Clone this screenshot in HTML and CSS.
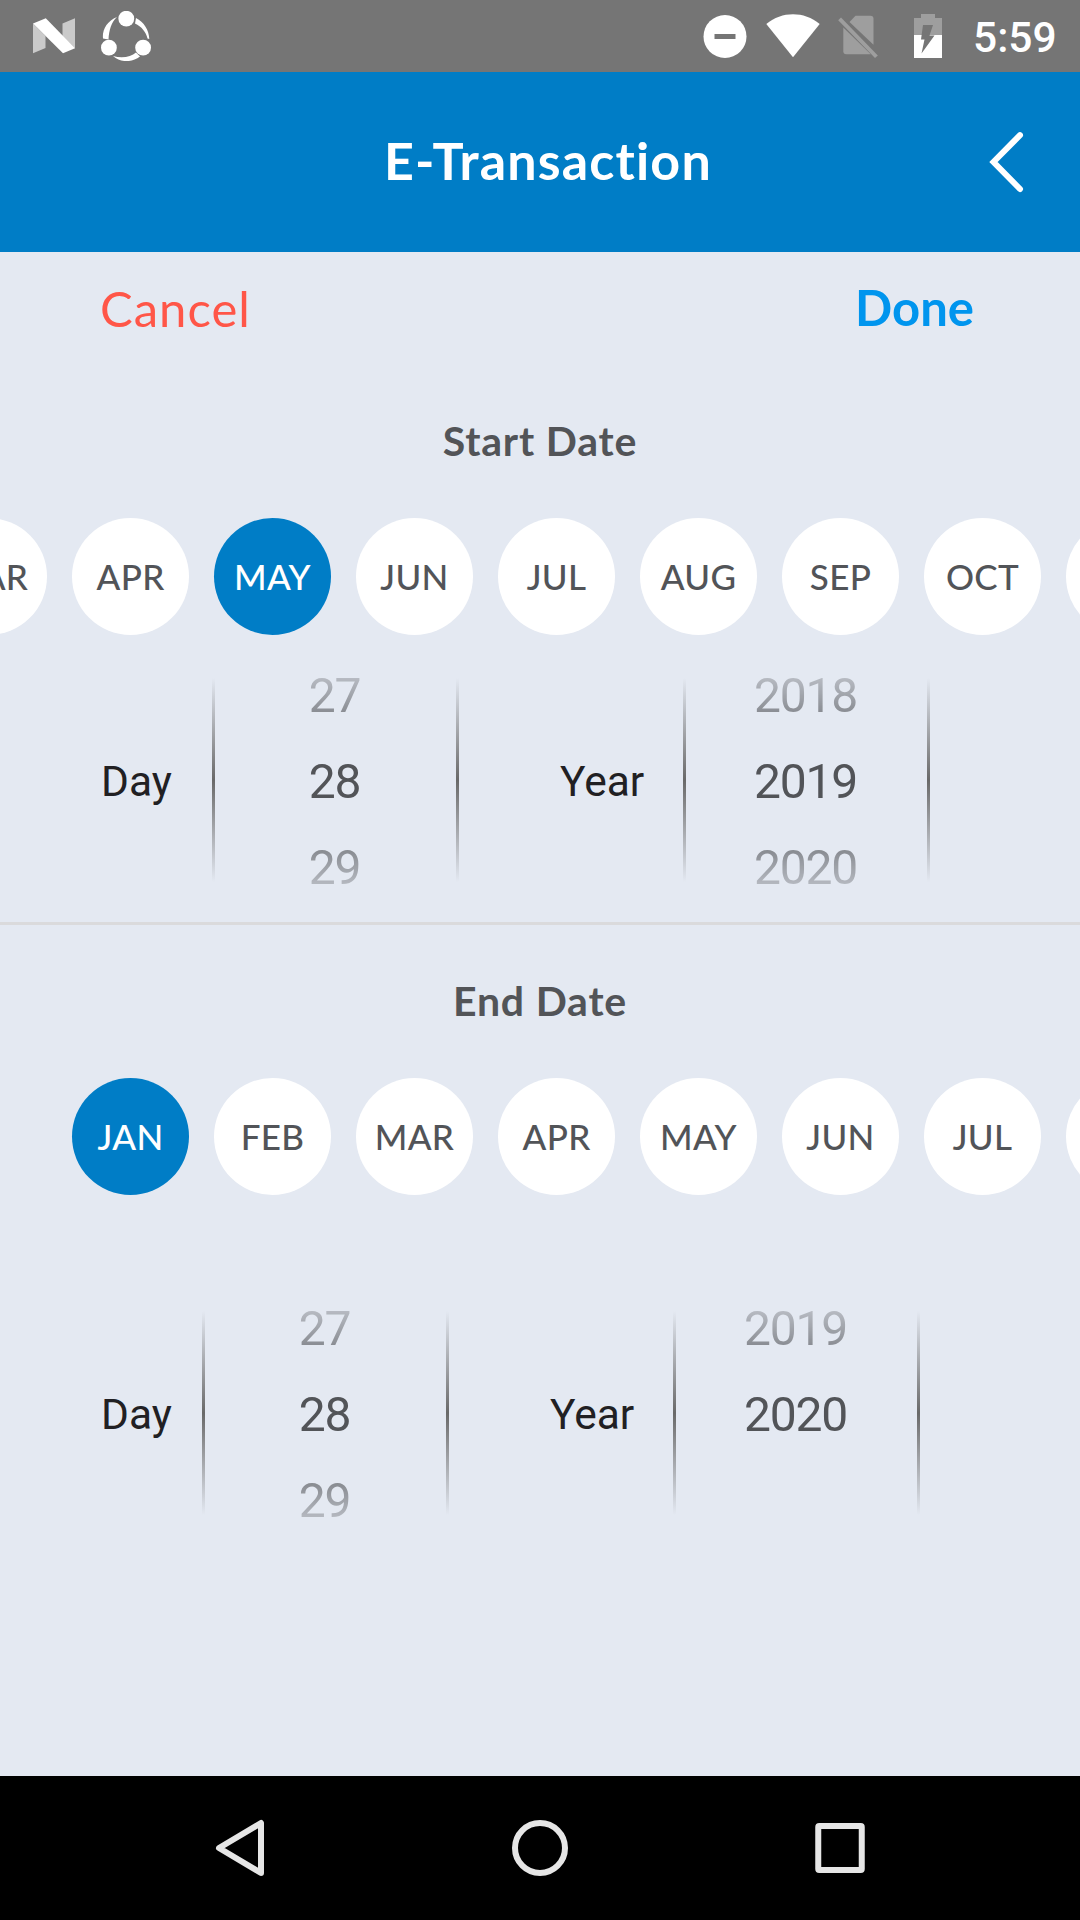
FILE: index.html
```html
<!DOCTYPE html>
<html lang="en">
<head>
<meta charset="utf-8">
<title>E-Transaction</title>
<link rel="stylesheet" href="styles.css">
</head>
<body>
<div class="screen">
  <div class="status">
    <svg class="icon-n" width="42" height="36" viewBox="0 0 42 36"><path fill="#cacaca" d="M0 5.500L12.500 18V30L0 35.300zM29.500 5.500L42 .3V30.500L29.500 18z"/><path fill="#fff" d="M0 5.500L12.800 .2L42 30.300L30 35.300z"/></svg>
    <svg class="icon-share" width="50" height="50" viewBox="0 0 50 50"><g fill="#fff"><circle cx="25.300" cy="7.700" r="7.900"/><circle cx="7.900" cy="36.700" r="7.900"/><circle cx="42.100" cy="36.700" r="7.900"/><path d="M16 6C6 10 1 19 2 27.500L7.500 28.500C8 19 10.500 11 16 6zM35 7C43 11 48 19 48.300 28L46.500 27.500C45 21 40.500 15.500 34 12.500zM12 45C20 52 31 51.500 39 45.500L35 41.500C30 46 21 47.500 12 45z"/></g></svg>
    <span class="spacer"></span>
    <svg class="icon-dnd" width="44" height="44" viewBox="0 0 44 44"><circle cx="22" cy="22.500" r="21.500" fill="#fff"/><path fill="#757575" d="M11.500 20h21v5h-21z"/></svg>
    <svg class="icon-wifi" width="54" height="44" viewBox="0 0 54 44"><path fill="#fff" d="M.3 10C16-3 38-3 53.700 10L27 43.200z"/></svg>
    <svg class="icon-sim" width="42" height="44" viewBox="0 0 42 44"><g fill="#9e9e9e"><path d="M12.500 8L18.500 1.800H33.500Q36.500 1.800 36.500 4.800V30.800z"/><path d="M6.300 13.500L33.800 40.300H9.300Q6.300 40.300 6.300 37.300z"/><path d="M1.200 6.300L4 3.600L40.800 41.500L38 44z"/></g></svg>
    <svg class="icon-battery" width="28" height="44" viewBox="0 0 28 44"><path fill="#9e9e9e" d="M7 0H21V4H28V21H0V4H7z"/><path fill="#fff" d="M0 21H28V44H0z"/><path fill="#757575" d="M9 11H19L15.500 21.500H20.500L7.500 39.500L10.500 25.500H7z"/></svg>
    <span class="clock">5:59</span>
  </div>
  <header class="header">
    <h1 class="title">E-Transaction</h1>
    <svg class="back" width="40" height="64" viewBox="0 0 40 64"><path fill="none" stroke="#fff" stroke-width="6" stroke-linecap="round" d="M33 5.200L6.500 32L33 59"/></svg>
  </header>
  <main class="content">
    <div class="actions"><span class="cancel">Cancel</span><span class="done">Done</span></div>
    <section class="range range-start">
      <h2 class="heading">Start Date</h2>
      <div class="months scrolled">
        <span class="month">MAR</span><span class="month">APR</span><span class="month selected">MAY</span><span class="month">JUN</span><span class="month">JUL</span><span class="month">AUG</span><span class="month">SEP</span><span class="month">OCT</span><span class="month">NOV</span>
      </div>
      <div class="pickers">
        <span class="label">Day</span>
        <div class="wheel"><div class="values"><span>27</span><span>28</span><span>29</span></div></div>
        <span class="label year">Year</span>
        <div class="wheel"><div class="values"><span>2018</span><span>2019</span><span>2020</span></div></div>
      </div>
    </section>
    <section class="range range-end">
      <h2 class="heading">End Date</h2>
      <div class="months">
        <span class="month selected">JAN</span><span class="month">FEB</span><span class="month">MAR</span><span class="month">APR</span><span class="month">MAY</span><span class="month">JUN</span><span class="month">JUL</span><span class="month">AUG</span>
      </div>
      <div class="pickers">
        <span class="label">Day</span>
        <div class="wheel"><div class="values"><span>27</span><span>28</span><span>29</span></div></div>
        <span class="label year">Year</span>
        <div class="wheel"><div class="values"><span>2019</span><span>2020</span><span></span></div></div>
      </div>
    </section>
  </main>
  <nav class="navbar">
    <svg width="60" height="60" viewBox="0 0 60 60"><path fill="none" stroke="#e6e6e6" stroke-width="6" stroke-linejoin="round" d="M51 5V55L9 30z"/></svg>
    <svg width="60" height="60" viewBox="0 0 60 60"><circle cx="30" cy="30" r="25" fill="none" stroke="#e6e6e6" stroke-width="6"/></svg>
    <svg width="60" height="60" viewBox="0 0 60 60"><rect x="8.250" y="8" width="43.500" height="44" rx="1" fill="none" stroke="#e6e6e6" stroke-width="6"/></svg>
  </nav>
</div>
</body>
</html>
```
FILE: styles.css
```css
* { box-sizing: border-box; }
body { margin: 0; font-family: Lato, sans-serif; }
svg { display: block; flex: none; }
.screen { width: 1080px; height: 1920px; display: flex; flex-direction: column; overflow: hidden; background: #e4e9f2; }

.status { height: 72px; flex: none; display: flex; align-items: flex-start; padding: 0 25px 0 33px; background: #757575; }
.icon-n { margin-top: 18px; }
.icon-share { margin: 11px 0 0 26px; }
.spacer { flex: 1; }
.icon-dnd { margin-top: 14px; }
.icon-wifi { margin: 14px 0 0 19px; }
.icon-sim { margin: 14px 0 0 17px; }
.icon-battery { margin: 14px 0 0 35px; }
.clock { width: 82px; margin-left: 31px; color: #fff; font: 500 42.500px/76px Roboto, sans-serif; white-space: nowrap; }

.header { height: 180px; flex: none; display: flex; align-items: center; justify-content: space-between; padding: 0 53px 0 384px; background: #007dc6; }
.title { margin: 0; color: #fff; font-size: 52px; font-weight: 700; letter-spacing: 1.15px; line-height: 64px; padding-bottom: 4px; white-space: nowrap; }

.content { flex: 1; display: flex; flex-direction: column; }
.actions { height: 111px; display: flex; justify-content: space-between; align-items: center; padding: 0 106px 0 100px; font-size: 49px; line-height: 60px; }
.cancel { color: #ff5648; letter-spacing: 1px; }
.done { color: #0095ee; font-weight: 700; padding-bottom: 2px; }

.range { display: flex; flex-direction: column; }
.heading { margin: 0; color: #525458; font-size: 41px; font-weight: 700; letter-spacing: .8px; text-align: center; line-height: 50px; }
.range-start { height: 562px; padding-top: 53px; border-bottom: 3px solid #dadadc; }
.range-end { padding-top: 51px; }
.months { display: flex; gap: 25px; margin-top: 52px; padding-left: 72px; overflow: hidden; }
.months.scrolled { padding-left: 0; margin-left: -70px; }
.month { width: 117px; height: 117px; flex: none; border-radius: 50%; background: #fff; color: #525458; font-size: 35px; font-weight: 500; letter-spacing: .3px; line-height: 116px; text-align: center; }
.month.selected { background: #007dc6; color: #fff; }

.pickers { height: 258px; display: flex; align-items: center; padding-left: 101px; margin-top: 18px; font-family: Roboto, sans-serif; }
.range-end .pickers { margin-top: 91px; }
.label { width: 111px; color: #212023; font-size: 42.500px; line-height: 50px; }
.label.year { width: 123px; margin-left: 101px; }
.range-end .label { width: 101px; }
.range-end .label.year { width: 123px; }
.wheel { width: 247px; height: 258px; display: flex; align-items: center; }
.wheel::before, .wheel::after { content: ""; width: 3px; height: 204px; margin-bottom: 4px; background: linear-gradient(rgba(105,105,105,0), #696969 50%, rgba(105,105,105,0)); }
.values { flex: 1; display: grid; grid-template-rows: repeat(3, 86px); padding-right: 2px; color: #525458; font-size: 48px; letter-spacing: -1.2px; line-height: 86px; text-align: center; -webkit-mask-image: linear-gradient(rgba(0,0,0,.09) 0, #000 103px, #000 155px, rgba(0,0,0,.09) 100%); mask-image: linear-gradient(rgba(0,0,0,.09) 0, #000 103px, #000 155px, rgba(0,0,0,.09) 100%); }

.navbar { height: 144px; flex: none; display: flex; justify-content: space-between; align-items: center; padding: 0 210px; background: #000; }
```
